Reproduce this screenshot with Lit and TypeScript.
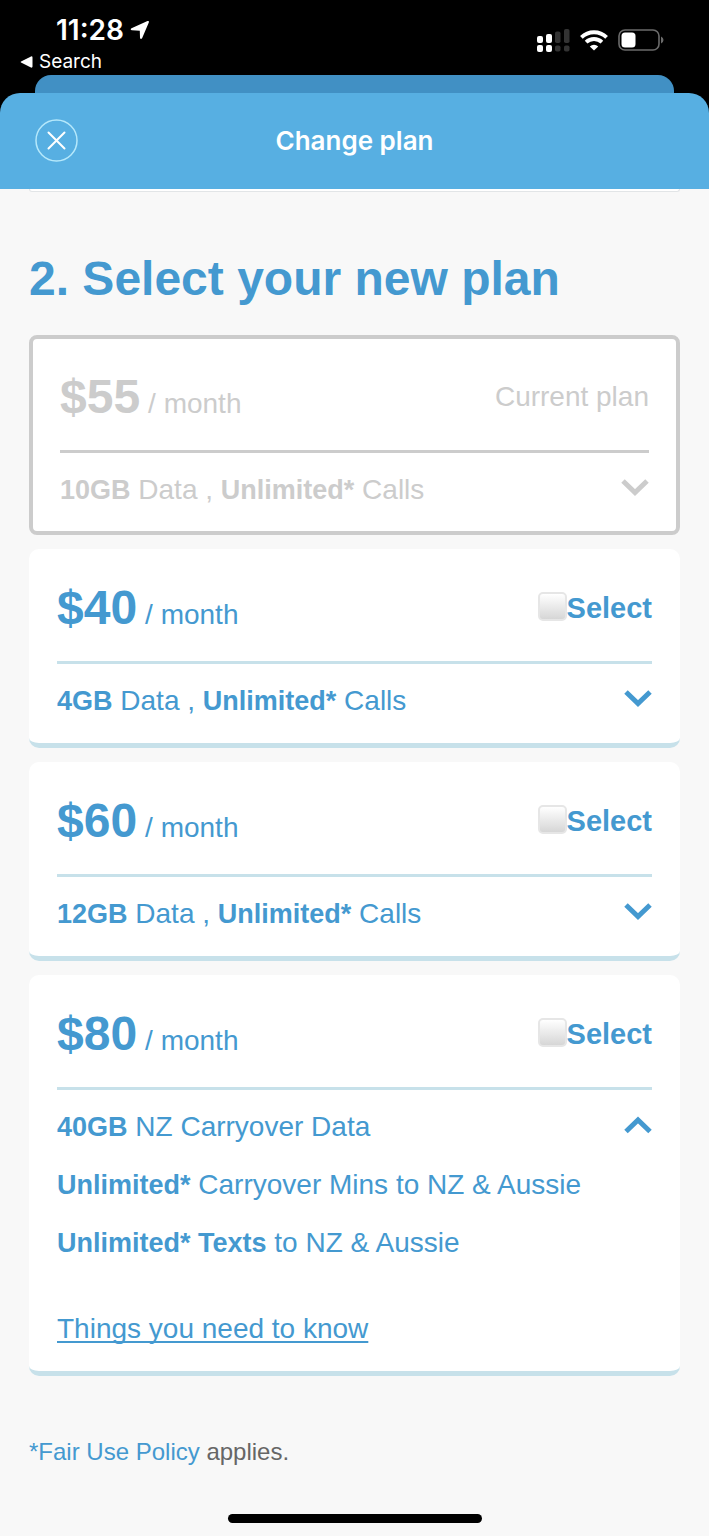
import { LitElement, html, css, svg } from "lit";
import { customElement, property, state } from "lit/decorators.js";
import { classMap } from "lit/directives/class-map.js";

interface Plan {
  id: string;
  price: string;
  data: string;
  current?: boolean;
  open?: boolean;
}

const PLANS: Plan[] = [
  { id: "p55", price: "$55", data: "10GB", current: true },
  { id: "p40", price: "$40", data: "4GB" },
  { id: "p60", price: "$60", data: "12GB" },
  { id: "p80", price: "$80", data: "40GB", open: true },
];

@customElement("status-bar")
class StatusBar extends LitElement {
  static styles = css`
    :host {
      display: flex;
      justify-content: space-between;
      height: 75px;
      box-sizing: border-box;
      padding: 12px 45px 0 20px;
      background: #000;
      color: #fff;
      font-family: Inter, "Liberation Sans", sans-serif;
    }
    .clock {
      display: flex;
      align-items: center;
      gap: 6px;
      padding-left: 36px;
      font-size: 28px;
      font-weight: 600;
      line-height: 36px;
    }
    .back {
      display: flex;
      align-items: center;
      gap: 6px;
      color: inherit;
      text-decoration: none;
      font-size: 19px;
      line-height: 28px;
    }
    .icons {
      display: flex;
      align-items: center;
      gap: 10px;
      height: 56px;
    }
    svg {
      display: block;
    }
  `;

  render() {
    return html`
      <div>
        <div class="clock">
          <span>11:28</span>
          <svg width="20" height="20" viewBox="0 0 20 20" aria-hidden="true">
            <path
              d="M1.500 8.300 17.500 1.100q1.900-.6 1.300 1.300L12.200 18q-1.500 1.900-2.200-.3L9.800 10.700 2 10.300q-2.300-.5-.5-2z"
              fill="#fff"
            />
          </svg>
        </div>
        <a class="back" href="#">
          <svg width="13" height="12" viewBox="0 0 13 12" aria-hidden="true">
            <path d="M1 5.400 11 .4q1.500-.4 1.500 1v9.200q0 1.400-1.500 1L1 6.600q-.8-.6 0-1.200z" fill="#fff" />
          </svg>
          <span>Search</span>
        </a>
      </div>
      <div class="icons">
        <svg width="34" height="24" viewBox="0 0 34 24" role="img" aria-label="Signal">
          <g fill="#fff">
            <rect x="1" y="8" width="6" height="7" rx="2" />
            <rect x="10" y="6" width="6" height="9" rx="2" />
            <rect x="1" y="17" width="6" height="7" rx="2" />
            <rect x="10" y="17" width="6" height="7" rx="2" />
          </g>
          <g fill="#333">
            <rect x="19" y="3.500" width="5.500" height="11.500" rx="1.800" />
            <rect x="28" y="1" width="5.500" height="14" rx="1.800" />
            <rect x="19" y="17.500" width="5.500" height="6" rx="1.800" />
            <rect x="28" y="17.500" width="5.500" height="6" rx="1.800" />
          </g>
        </svg>
        <svg width="28" height="21" viewBox="0 0 28 21" role="img" aria-label="Wi-Fi">
          <g fill="none" stroke="#fff" stroke-width="3.800">
            <path d="M1.400 7.400a18 18 0 0 1 25.200 0" />
            <path d="M6.100 12.200a11.300 11.300 0 0 1 15.800 0" />
          </g>
          <path d="M14 20.600 9.800 16.400a6 6 0 0 1 8.400 0z" fill="#fff" />
        </svg>
        <svg width="46" height="22" viewBox="0 0 46 22" role="img" aria-label="Battery">
          <rect x="1" y="1" width="40" height="20" rx="6" fill="none" stroke="#6b6b6b" stroke-width="1.600" />
          <rect x="3.500" y="3.500" width="14" height="15" rx="3.500" fill="#fff" />
          <path d="M43 7.500q2.500 1 2.500 3.500t-2.500 3.500z" fill="#6b6b6b" />
        </svg>
      </div>
    `;
  }
}

@customElement("plan-card")
class PlanCard extends LitElement {
  @property({ attribute: false }) plan!: Plan;
  @state() private open = false;

  static styles = css`
    :host {
      display: block;
    }
    .card {
      padding: 0 28px;
      background: #fff;
      border-bottom: 5px solid #c7e1ea;
      border-radius: 10px;
      color: #4499d0;
      --rule: #c7e1ea;
    }
    .card.current {
      padding: 0 27px;
      border: 4px solid #ccc;
      border-radius: 8px;
      color: #ccc;
      --rule: #ccc;
    }
    b {
      font-size: 27px;
    }
    .top {
      display: flex;
      justify-content: space-between;
      align-items: center;
      padding: 31px 0 25px;
      border-bottom: 3px solid var(--rule);
    }
    .current .top {
      padding-top: 30px;
    }
    .cost {
      display: flex;
      align-items: baseline;
      gap: 8px;
      line-height: 34px;
    }
    .price {
      font-size: 48px;
      font-weight: 700;
      line-height: 56px;
    }
    .pick {
      display: flex;
      align-items: center;
      font-size: 29px;
      font-weight: 700;
      line-height: 34px;
    }
    .box {
      appearance: none;
      width: 29px;
      height: 29px;
      margin: 0 0 3px;
      border: 2px solid #e6e6e6;
      border-radius: 5px;
      background: linear-gradient(#fff, #d6d6d6);
    }
    .box:checked {
      background: #4499d0;
    }
    .details {
      display: flex;
      justify-content: space-between;
      align-items: flex-start;
      padding: 20px 0 25px;
      line-height: 34px;
    }
    .current .details {
      padding-bottom: 24px;
    }
    .list {
      display: flex;
      flex-direction: column;
      gap: 24px;
      margin: 0;
      padding: 0;
      list-style: none;
    }
    .more {
      display: block;
      margin-top: 52px;
      color: inherit;
      text-decoration-thickness: 2px;
      text-underline-offset: 3px;
      text-decoration-skip-ink: none;
    }
    .toggle {
      padding: 0;
      border: 0;
      background: none;
      color: inherit;
    }
    .toggle svg {
      display: block;
    }
  `;

  willUpdate(changed: Map<string, unknown>) {
    if (changed.has("plan")) this.open = !!this.plan.open;
  }

  render() {
    const { id, price, data, current } = this.plan;
    const arrow = this.open
      ? svg`<path d="M2 21.500 14 10 26 21.500" />`
      : svg`<path d="M2 8 14 19.500 26 8" />`;
    return html`
      <section class=${classMap({ card: true, current: !!current })}>
        <div class="top">
          <div class="cost"><span class="price">${price}</span><span>/ month</span></div>
          ${current
            ? html`<span>Current plan</span>`
            : html`<label class="pick" for=${id}
                ><input class="box" type="checkbox" id=${id} /><span>Select</span></label
              >`}
        </div>
        <div class="details">
          ${this.open
            ? html`<div>
                <ul class="list">
                  <li><b>${data}</b> NZ Carryover Data</li>
                  <li><b>Unlimited*</b> Carryover Mins to NZ &amp; Aussie</li>
                  <li><b>Unlimited* Texts</b> to NZ &amp; Aussie</li>
                </ul>
                <a class="more" href="#">Things you need to know</a>
              </div>`
            : html`<div><b>${data}</b> Data , <b>Unlimited*</b> Calls</div>`}
          <button
            class="toggle"
            aria-label="Plan details"
            aria-expanded=${this.open}
            ?disabled=${!!current}
            @click=${() => (this.open = !this.open)}
          >
            <svg width="28" height="28" viewBox="0 0 28 28" fill="none" stroke="currentColor" stroke-width="5">
              ${arrow}
            </svg>
          </button>
        </div>
      </section>
    `;
  }
}

@customElement("app-root")
class AppRoot extends LitElement {
  static styles = css`
    :host {
      display: flex;
      flex-direction: column;
      min-height: 100vh;
      background: #f8f8f8;
      font-family: "Liberation Sans", Arial, sans-serif;
      font-size: 28px;
    }
    .sheet {
      padding: 0 35px;
      background: #000;
    }
    .behind {
      height: 18px;
      border-radius: 16px 16px 0 0;
      background: #4190c4;
    }
    .corners {
      background: #000;
    }
    .header {
      display: grid;
      grid-template-columns: 43px 1fr 43px;
      align-items: center;
      height: 96px;
      box-sizing: border-box;
      padding: 0 35px;
      border-radius: 20px 20px 0 0;
      background: #57afe2;
      color: #fff;
    }
    .close {
      padding: 0;
      border: 0;
      background: none;
    }
    .close svg {
      display: block;
      overflow: visible;
    }
    .title {
      margin: 0;
      text-align: center;
      font: 600 26px/32px Inter, "Liberation Sans", sans-serif;
    }
    .content {
      padding: 0 29px;
    }
    .previous {
      height: 2px;
      background: #fff;
      border: 1px solid #e2e5e7;
      border-top: 0;
      border-radius: 0 0 4px 4px;
    }
    .heading {
      margin: 59px 0 28px;
      color: #4499d0;
      font-size: 48px;
      line-height: 56px;
    }
    .plans {
      display: flex;
      flex-direction: column;
      gap: 14px;
    }
    .note {
      margin: 58px 0 0;
      color: #666;
      font-size: 24px;
      line-height: 36px;
    }
    .note a {
      color: #4499d0;
      text-decoration: none;
    }
    .home {
      width: 254px;
      height: 9px;
      margin: auto auto 13px;
      border-radius: 5px;
      background: #000;
    }
  `;

  render() {
    return html`
      <status-bar></status-bar>
      <div class="sheet"><div class="behind"></div></div>
      <div class="corners">
        <header class="header">
          <button class="close" aria-label="Close">
            <svg width="43" height="43" viewBox="0 0 43 43" fill="none">
              <circle cx="21.500" cy="20.500" r="20.500" stroke="#b5e8fb" stroke-width="1.500" />
              <path d="M13.500 12.500l16 16M29.500 12.500l-16 16" stroke="#fff" stroke-width="2" stroke-linecap="round" />
            </svg>
          </button>
          <h1 class="title">Change plan</h1>
        </header>
      </div>
      <main class="content">
        <div class="previous"></div>
        <h2 class="heading">2. Select your new plan</h2>
        <div class="plans">${PLANS.map((plan) => html`<plan-card .plan=${plan}></plan-card>`)}</div>
        <p class="note"><a href="#">*Fair Use Policy</a> applies.</p>
      </main>
      <div class="home"></div>
    `;
  }
}
